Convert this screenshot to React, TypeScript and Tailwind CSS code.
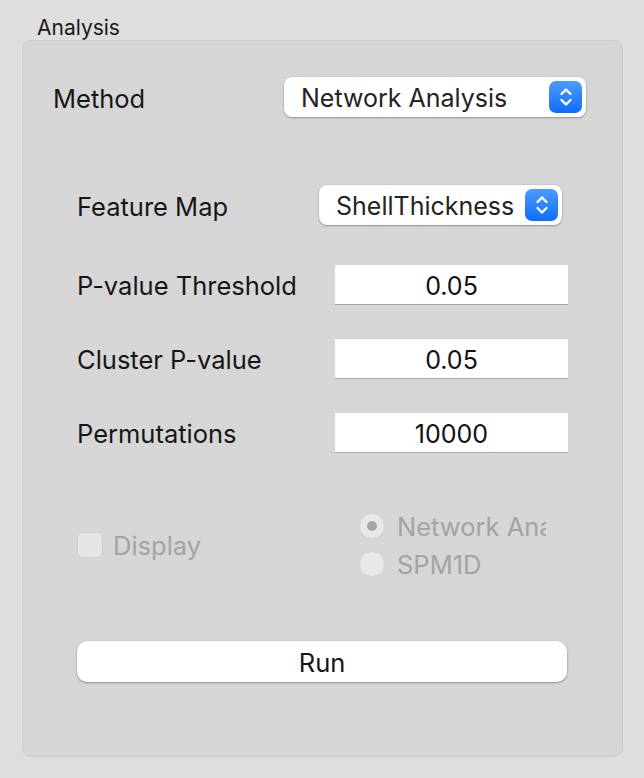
import React from 'react';

const font = { fontFamily: 'Inter, "Liberation Sans", sans-serif' };

const Stepper: React.FC = () => (
  <div className="flex h-[32px] w-[33px] items-center justify-center rounded-[7px] bg-gradient-to-b from-[#4a9bff] to-[#0b6cfb]">
    <svg width="16" height="22" viewBox="0 0 16 22" fill="none" stroke="white" strokeWidth="2.4" strokeLinecap="round" strokeLinejoin="round">
      <path d="M3.5 8 L8 3.5 L12.5 8" />
      <path d="M3.5 14 L8 18.5 L12.5 14" />
    </svg>
  </div>
);

const Popup: React.FC<{ label: string; width: string }> = ({ label, width }) => (
  <div className={`flex h-[40px] ${width} items-center justify-between rounded-[8px] bg-white pl-[17px] pr-[4px] shadow-[0_1px_2px_rgba(0,0,0,0.3),0_0_0_0.5px_rgba(0,0,0,0.08)]`}>
    <span className="pt-[2px] text-[25px] leading-[30px] text-[#232323]">{label}</span>
    <Stepper />
  </div>
);

const Field: React.FC<{ value: string }> = ({ value }) => (
  <div className="flex h-[39px] w-[233px] items-center justify-center bg-white pt-[2px] text-[25px] leading-[30px] text-[#111] shadow-[0_1px_0_#a8a8a8]">
    {value}
  </div>
);

export default function App() {
  return (
    <div style={font} className="h-[778px] w-[644px] bg-[#dedede] pt-[15px]">
      <div className="pl-[37px] text-[21px] leading-[25px] text-[#1a1a1a]">Analysis</div>
      <div className="ml-[22px] h-[717px] w-[601px] rounded-[9px] border border-[#cdcdcd] bg-[#d6d6d6]">
        <div className="flex items-center justify-between pl-[30px] pr-[36px] pt-[36px]">
          <span className="pt-[3px] text-[25.5px] leading-[30px] text-[#161616]">Method</span>
          <Popup label="Network Analysis" width="w-[302px]" />
        </div>

        <div className="mt-[68px] px-[54px] text-[25.5px] leading-[30px]">
          <div className="flex items-center justify-between pr-[6px]">
            <span className="pt-[3px] text-[#161616]">Feature Map</span>
            <Popup label="ShellThickness" width="w-[243px]" />
          </div>
          <div className="mt-[40px] flex items-center justify-between">
            <span className="pt-[3px] text-[#161616]">P-value Threshold</span>
            <Field value="0.05" />
          </div>
          <div className="mt-[35px] flex items-center justify-between">
            <span className="pt-[3px] text-[#161616]">Cluster P-value</span>
            <Field value="0.05" />
          </div>
          <div className="mt-[35px] flex items-center justify-between">
            <span className="pt-[3px] text-[#161616]">Permutations</span>
            <Field value="10000" />
          </div>

          <div className="mt-[61px] flex items-center">
            <div className="flex w-[282px] items-center gap-[10px]">
              <div className="h-[26px] w-[26px] rounded-[6px] border border-[#d0d0d0] bg-[#e6e6e6]" />
              <span className="pt-[2px] leading-[24px] text-[#a3a3a3]">Display</span>
            </div>
            <div className="flex flex-col gap-[12px]">
              <div className="flex items-center gap-[12px]">
                <div className="flex h-[26px] w-[26px] items-center justify-center rounded-full border border-[#d4d4d4] bg-[#e8e8e8]">
                  <div className="h-[10px] w-[10px] rounded-full bg-[#a6a6a6]" />
                </div>
                <span className="w-[149px] overflow-hidden whitespace-nowrap pt-[2px] leading-[24px] text-[#a3a3a3]">Network Analysis</span>
              </div>
              <div className="flex items-center gap-[12px]">
                <div className="h-[26px] w-[26px] rounded-full border border-[#d4d4d4] bg-[#e8e8e8]" />
                <span className="pt-[2px] leading-[24px] text-[#a3a3a3]">SPM1D</span>
              </div>
            </div>
          </div>

          <div className="mt-[64px] flex h-[41px] w-[490px] items-center justify-center rounded-[10px] bg-white pt-[2px] text-[#161616] shadow-[0_1px_2px_rgba(0,0,0,0.3),0_0_0_0.5px_rgba(0,0,0,0.08)]">
            Run
          </div>
        </div>
      </div>
    </div>
  );
}
